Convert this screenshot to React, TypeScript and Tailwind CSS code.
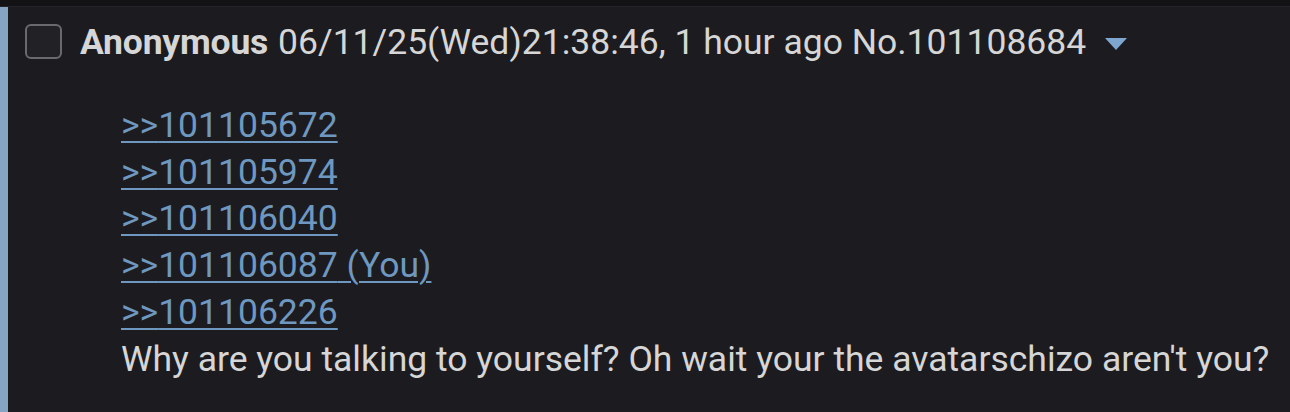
import React from "react";

const links = ["101105672", "101105974", "101106040", "101106087", "101106226"];

export default function App() {
  return (
    <div
      className="w-[1290px] h-[412px] bg-[#1c1c20] flex flex-col overflow-hidden"
      style={{ fontFamily: "Roboto, 'Noto Sans', sans-serif" }}
    >
      <div className="h-[7px] bg-[#131316] border-b border-[#242428] shrink-0" />
      <div className="flex flex-1">
        <div className="w-[8px] bg-[#86a4c4] shrink-0" />
        <div className="flex-1 flex flex-col">
          <div className="flex items-center h-[72px] pl-[17px]">
            <div className="w-[37px] h-[35px] rounded-[6px] border-2 border-[#6a6a6e] bg-[#222226] mr-[18px] mt-[-3px]" />
            <span className="text-[35.5px] font-bold text-[#d6d6d6] tracking-[-0.2px]">Anonymous</span>
            <span className="text-[35.5px] text-[#d6d6d6] ml-[10px]">
              06/11/25(Wed)21:38:46, 1 hour ago No.101108684
            </span>
            <svg width="24" height="14" viewBox="0 0 24 14" className="ml-[18px] mt-[2px]">
              <polygon points="1,1 23,1 12,13" fill="#7fa6cf" />
            </svg>
          </div>
          <div className="pl-[113px] pt-[23px] flex flex-col text-[35.5px] leading-[46.7px]">
            {links.map((l, i) => (
              <div key={l}>
                <span className="text-[#6f98c0] underline decoration-[2px] underline-offset-[4px]">
                  &gt;&gt;{l}
                  {i === 3 ? " (You)" : ""}
                </span>
              </div>
            ))}
            <div className="text-[#d6d6d6]">
              Why are you talking to yourself? Oh wait your the avatarschizo aren't you?
            </div>
          </div>
        </div>
      </div>
    </div>
  );
}
